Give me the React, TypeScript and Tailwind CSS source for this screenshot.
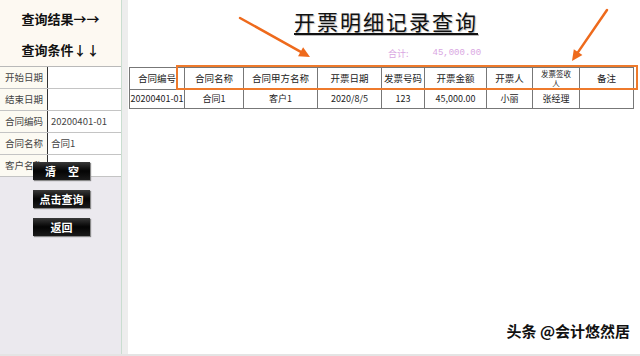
import React from "react";

const cjk = "font-['Noto_Sans_CJK_SC','Liberation_Sans',sans-serif]";

const formRows = [
  { label: "开始日期", value: "" },
  { label: "结束日期", value: "" },
  { label: "合同编码", value: "20200401-01" },
  { label: "合同名称", value: "合同1" },
  { label: "客户名称", value: "" },
];

const columns = [
  { title: "合同编号", w: "w-[55px]", v: "20200401-01" },
  { title: "合同名称", w: "w-[59px]", v: "合同1" },
  { title: "合同甲方名称", w: "w-[74px]", v: "客户1" },
  { title: "开票日期", w: "w-[64px]", v: "2020/8/5" },
  { title: "发票号码", w: "w-[43px]", v: "123" },
  { title: "开票金额", w: "w-[62px]", v: "45,000.00" },
  { title: "开票人", w: "w-[46px]", v: "小丽" },
  { title: "发票签收人", w: "w-[47px]", v: "张经理" },
  { title: "备注", w: "w-[54px]", v: "" },
];

const BlackButton = ({ children }: { children: React.ReactNode }) => (
  <button className="h-[18px] w-[57px] bg-gradient-to-b from-[#3a3a3a] via-[#050505] to-[#1a1a1a] text-white text-[11px] font-bold leading-none whitespace-nowrap shadow-[1px_1px_1px_#888]">
    {children}
  </button>
);

const Sidebar = () => (
  <div className="w-[122px] h-full flex flex-col bg-[#ebe9ee] border-r border-[#c9ddd0]">
    <div className="bg-[#fdf9f2] h-[66px] flex flex-col items-center pt-[10px] gap-[13px]">
      <div className="text-[13px] font-bold text-[#111] leading-[18px]">查询结果→→</div>
      <div className="text-[13px] font-bold text-[#111] leading-[18px]">查询条件↓↓</div>
    </div>
    <div className="border-t border-[#b9b9b9]">
      {formRows.map((r) => (
        <div key={r.label} className="flex h-[22px] border-b border-[#c4c4c4] text-[9.5px] text-[#444]">
          <div className="w-[48px] bg-[#fcfaf2] border-r border-[#333] flex items-center pl-[5px] overflow-hidden whitespace-nowrap">
            {r.label}
          </div>
          <div className="flex-1 bg-white flex items-center pl-[3px] whitespace-nowrap">{r.value}</div>
        </div>
      ))}
    </div>
    <div className="flex flex-col gap-[10px] pl-[33px] mt-[-15px]">
      <BlackButton>
        <span className="tracking-[12px] pl-[12px]">清空</span>
      </BlackButton>
      <BlackButton>点击查询</BlackButton>
      <BlackButton>返回</BlackButton>
    </div>
  </div>
);

const Arrow = ({ x1, y1, x2, y2 }: { x1: number; y1: number; x2: number; y2: number }) => {
  const ang = Math.atan2(y2 - y1, x2 - x1);
  const len = 12;
  const spread = 0.45;
  const ax = x2 - len * Math.cos(ang - spread);
  const ay = y2 - len * Math.sin(ang - spread);
  const bx = x2 - len * Math.cos(ang + spread);
  const by = y2 - len * Math.sin(ang + spread);
  const sx = x2 - 8 * Math.cos(ang);
  const sy = y2 - 8 * Math.sin(ang);
  return (
    <>
      <line x1={x1} y1={y1} x2={sx} y2={sy} stroke="#ee6a1c" strokeWidth="2.5" strokeLinecap="round" />
      <polygon points={`${x2},${y2} ${ax},${ay} ${bx},${by}`} fill="#ee6a1c" />
    </>
  );
};

const Main = () => (
  <div className="relative flex-1 h-full bg-white border-l-[6px] border-[#ededed]">
    <div className="h-[44px] flex items-center justify-center pl-[4px]">
      <span className="text-[21px] tracking-[2px] font-normal text-[#111] underline decoration-[2px] underline-offset-[3px] [text-shadow:1px_1px_1px_#bbb]">
        开票明细记录查询
      </span>
    </div>
    <div className="h-[19px] flex items-center text-[9px] text-[#d9a6e2] pl-[260px] gap-[24px]">
      <span>合计:</span>
      <span className="font-['Liberation_Mono',monospace]">45,000.00</span>
    </div>
    <div className="ml-[1px] mt-[3px] inline-flex flex-col border-l border-t border-[#777]">
      <div className="flex h-[22px]">
        {columns.map((c) => (
          <div
            key={c.title}
            className={`${c.w} border-r border-b border-[#777] flex flex-col items-center justify-center text-center text-[9.5px] text-[#222] leading-[10px] px-[2px]`}
          >
            {c.title === "发票签收人" ? (
              <>
                <span className="block text-[7.5px] leading-[11px]">发票签收</span>
                <span className="block text-[7.5px] leading-[10px]">人</span>
              </>
            ) : (
              c.title
            )}
          </div>
        ))}
      </div>
      <div className="flex h-[19px]">
        {columns.map((c) => (
          <div
            key={c.title}
            className={`${c.w} border-r border-b border-[#777] flex items-center justify-center text-[9px] text-[#222] whitespace-nowrap overflow-hidden`}
          >
            {c.v}
          </div>
        ))}
      </div>
    </div>
    <div className="absolute left-[48px] top-[65px] w-[462px] h-[25px] border-2 border-[#ee7a2c]" />
    <svg className="absolute left-0 top-0 pointer-events-none" width="512" height="356">
      <Arrow x1={112} y1={18} x2={182} y2={57} />
      <Arrow x1={479} y1={10} x2={444} y2={61} />
    </svg>
    <div className="absolute right-[10px] bottom-[12px] text-[15px] font-bold text-[#111] [text-shadow:1px_1px_0_#fff,-1px_-1px_0_#fff,1px_-1px_0_#fff,-1px_1px_0_#fff]">
      头条 @会计悠然居
    </div>
  </div>
);

export default function App() {
  return (
    <div className={`w-[640px] h-[356px] flex overflow-hidden border-b-2 border-[#e4e4e4] ${cjk}`}>
      <Sidebar />
      <Main />
    </div>
  );
}
